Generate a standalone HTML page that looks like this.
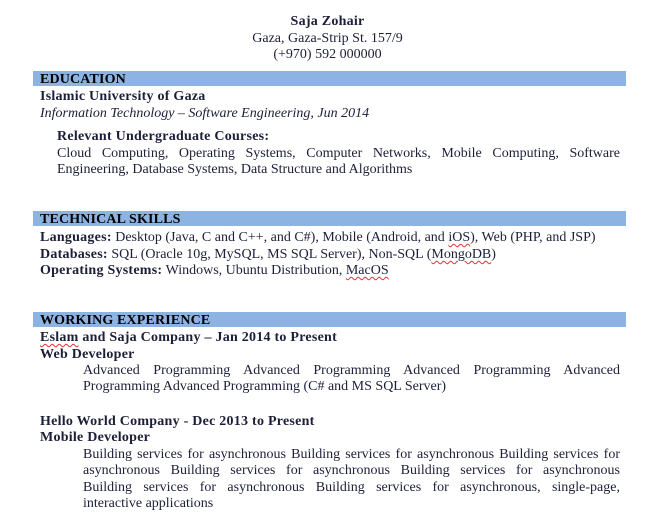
<!DOCTYPE html>
<html><head><meta charset="utf-8"><style>
body{margin:0;width:655px;height:530px;background:#fff;position:relative;overflow:hidden;font-family:"Liberation Serif",serif;font-size:14px;color:#1c1f38}
.l{position:absolute;line-height:17px;white-space:nowrap}
.j{white-space:normal;text-align:justify;text-align-last:justify}
.c{left:0;width:655px;text-align:center}
.bar{position:absolute;left:33px;width:593px;height:15px;background:#8db3e2}
.bar span{position:absolute;left:7px;top:0px;font-weight:bold;line-height:17px;color:#000;letter-spacing:0.15px}
b{font-weight:bold;letter-spacing:0.25px}
.sq{text-decoration:underline wavy #d33;text-decoration-thickness:1px;text-underline-offset:2px}
</style></head><body>
<div class="l c" style="top:13px"><b>Saja Zohair</b></div>
<div class="l c" style="top:30px">Gaza, Gaza-Strip St. 157/9</div>
<div class="l c" style="top:46px">(+970) 592 000000</div>

<div class="bar" style="top:71px"><span>EDUCATION</span></div>
<div class="l" style="left:40px;top:88px"><b>Islamic University of Gaza</b></div>
<div class="l" style="left:40px;top:105px"><i>Information Technology – Software Engineering, Jun 2014</i></div>
<div class="l" style="left:57px;top:128px"><b>Relevant Undergraduate Courses:</b></div>
<div class="l j" style="left:57px;width:563px;top:145px">Cloud Computing, Operating Systems, Computer Networks, Mobile Computing, Software</div>
<div class="l" style="left:57px;top:161px">Engineering, Database Systems, Data Structure and Algorithms</div>

<div class="bar" style="top:211px"><span>TECHNICAL SKILLS</span></div>
<div class="l" style="left:40px;top:229px"><b>Languages:</b> Desktop (Java, C and C++, and C#), Mobile (Android, and <span class="sq">iOS</span>), Web (PHP, and JSP)</div>
<div class="l" style="left:40px;top:246px"><b>Databases:</b> SQL (Oracle 10g, MySQL, MS SQL Server), Non-SQL (<span class="sq">MongoDB</span>)</div>
<div class="l" style="left:40px;top:262px"><b>Operating Systems:</b> Windows, Ubuntu Distribution, <span class="sq">MacOS</span></div>

<div class="bar" style="top:312px"><span>WORKING EXPERIENCE</span></div>
<div class="l" style="left:40px;top:329px"><b><span class="sq">Eslam</span> and Saja Company – Jan 2014 to Present</b></div>
<div class="l" style="left:40px;top:346px"><b>Web Developer</b></div>
<div class="l j" style="left:83px;width:537px;top:362px">Advanced Programming Advanced Programming Advanced Programming Advanced</div>
<div class="l" style="left:83px;top:378px">Programming Advanced Programming (C# and MS SQL Server)</div>

<div class="l" style="left:40px;top:413px"><b>Hello World Company - Dec 2013 to Present</b></div>
<div class="l" style="left:40px;top:429px"><b>Mobile Developer</b></div>
<div class="l j" style="left:83px;width:537px;top:446px">Building services for asynchronous Building services for asynchronous Building services for</div>
<div class="l j" style="left:83px;width:537px;top:462px">asynchronous Building services for asynchronous Building services for asynchronous</div>
<div class="l j" style="left:83px;width:537px;top:479px">Building services for asynchronous Building services for asynchronous, single-page,</div>
<div class="l" style="left:83px;top:495px">interactive applications</div>
</body></html>
